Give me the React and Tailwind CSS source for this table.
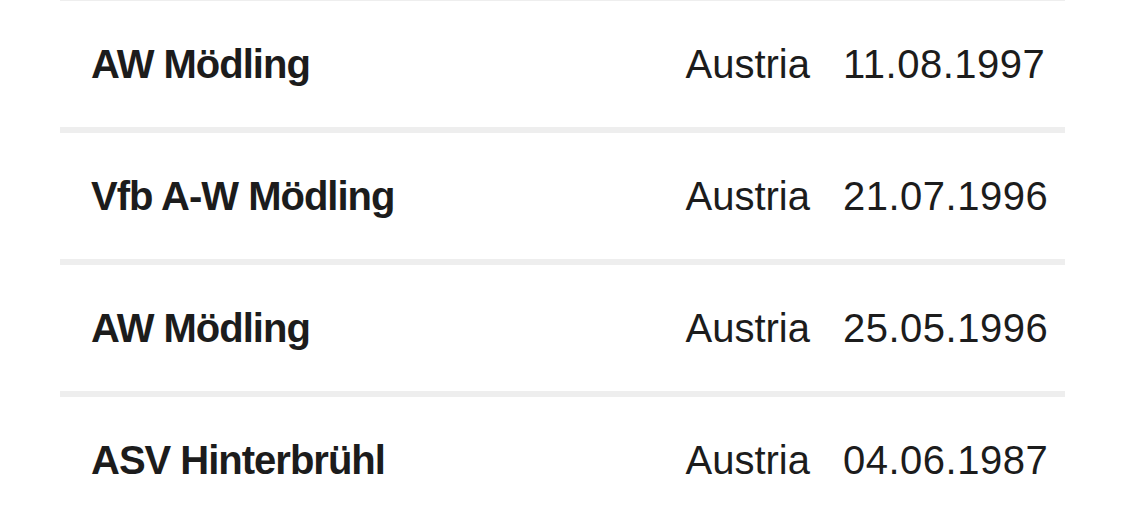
const rows = [
  { club: 'AW Mödling', country: 'Austria', date: '11.08.1997' },
  { club: 'Vfb A-W Mödling', country: 'Austria', date: '21.07.1996' },
  { club: 'AW Mödling', country: 'Austria', date: '25.05.1996' },
  { club: 'ASV Hinterbrühl', country: 'Austria', date: '04.06.1987' },
];

export default function App() {
  return (
    <div className="w-[1125px] h-[521px] overflow-hidden bg-white" style={{ fontFamily: '"Liberation Sans", Arial, sans-serif' }}>
      <div className="mx-[60px] flex flex-col">
        <div className="h-px bg-[#eeeeee]" />
        {rows.map((row, i) => (
          <div key={i}>
            {i > 0 && <div className="h-[6px] bg-[#eeeeee]" />}
            <div className="h-[126px] flex items-center pl-[31px] pr-[17px] text-[40px] text-[#1c1c1c]">
              <span className="font-bold tracking-[-1px]">{row.club}</span>
              <span className="ml-auto mr-[33px]">{row.country}</span>
              <span className="w-[205px] text-left tracking-[0.5px]">{row.date}</span>
            </div>
          </div>
        ))}
      </div>
    </div>
  );
}
